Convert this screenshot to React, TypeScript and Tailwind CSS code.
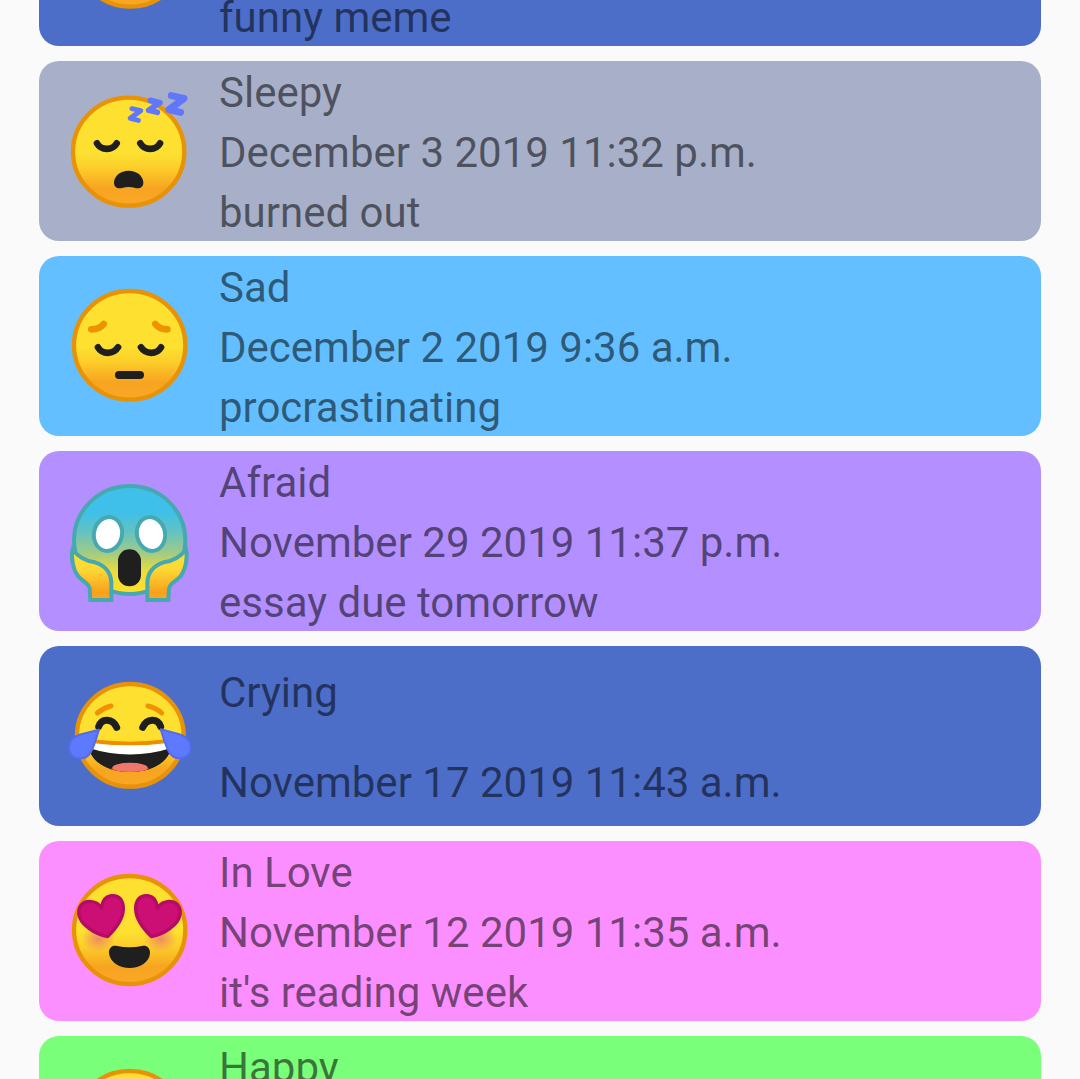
import type { ReactNode } from "react";

type Mood = "laughing" | "sleepy" | "sad" | "afraid" | "inLove" | "happy";

type Entry = {
  mood: Mood;
  color: string;
  lines: string[];
};

const entries: Entry[] = [
  { mood: "laughing", color: "bg-[#4c6ec9]", lines: ["", "", "funny meme"] },
  { mood: "sleepy", color: "bg-[#a8b0c9]", lines: ["Sleepy", "December 3 2019 11:32 p.m.", "burned out"] },
  { mood: "sad", color: "bg-[#63bfff]", lines: ["Sad", "December 2 2019 9:36 a.m.", "procrastinating"] },
  { mood: "afraid", color: "bg-[#b48fff]", lines: ["Afraid", "November 29 2019 11:37 p.m.", "essay due tomorrow"] },
  { mood: "laughing", color: "bg-[#4c6ec9]", lines: ["Crying", "November 17 2019 11:43 a.m."] },
  { mood: "inLove", color: "bg-[#fc8fff]", lines: ["In Love", "November 12 2019 11:35 a.m.", "it's reading week"] },
  { mood: "happy", color: "bg-[#7aff7a]", lines: ["Happy", "", ""] },
];

function Emoji({ viewBox, children }: { viewBox: string; children: ReactNode }) {
  return (
    <svg viewBox={viewBox} className="size-[140px]" aria-hidden="true">
      {children}
    </svg>
  );
}

function Face({ id, cx, cy, rx, ry }: { id: string; cx: number; cy: number; rx: number; ry: number }) {
  return (
    <>
      <defs>
        <linearGradient id={id} x1="0" y1="0" x2="0" y2="1">
          <stop offset="0" stopColor="#fde030" />
          <stop offset="0.52" stopColor="#fde030" />
          <stop offset="0.65" stopColor="#fcce2a" />
          <stop offset="0.84" stopColor="#f7a421" />
          <stop offset="1" stopColor="#f9a825" />
        </linearGradient>
      </defs>
      <ellipse cx={cx} cy={cy} rx={rx} ry={ry} fill={`url(#${id})`} stroke="#e89208" strokeWidth="13" />
    </>
  );
}

function Sleepy() {
  return (
    <Emoji viewBox="-3 3 420 420">
      <Face id="sleepy" cx={206} cy={215} rx={167} ry={162} />
      <g fill="none" stroke="#1f1f1f" strokeWidth="20" strokeLinecap="round" strokeLinejoin="round">
        <path d="M111 190C124 212 157 212 170 190" />
        <path d="M241 190C254 212 287 212 300 190" />
      </g>
      <path
        d="M206 272C181 272 164 287 162 306C161 323 174 327 186 324Q206 318 226 324C238 327 251 323 250 306C248 287 231 272 206 272Z"
        fill="#1f1f1f"
      />
      <g fill="none" stroke="#6177fa" strokeLinejoin="round" strokeLinecap="round">
        <path d="M216 86L242 92L211 115L235 121" strokeWidth="15" />
        <path d="M271 61L300 68L266 91L292 97" strokeWidth="17" />
        <path d="M334 47L372 55L327 89L362 97" strokeWidth="21" />
      </g>
    </Emoji>
  );
}

function Sad() {
  return (
    <Emoji viewBox="-3 3 420 420">
      <Face id="sad" cx={209} cy={211} rx={167} ry={163} />
      <g fill="none" stroke="#ef9200" strokeWidth="20" strokeLinecap="round">
        <path d="M94 163Q119 163 131 147" />
        <path d="M322 163Q298 163 286 147" />
      </g>
      <g fill="none" stroke="#1f1f1f" strokeWidth="20" strokeLinecap="round">
        <path d="M114 217C127 239 160 239 174 217" />
        <path d="M243 217C257 239 290 239 303 217" />
      </g>
      <path d="M177 300H240" stroke="#1f1f1f" strokeWidth="24" strokeLinecap="round" />
    </Emoji>
  );
}

function Afraid() {
  return (
    <Emoji viewBox="-3 3 420 420">
      <defs>
        <linearGradient id="afraid-skin" x1="0" y1="0" x2="0" y2="1">
          <stop offset="0" stopColor="#3ec0ec" />
          <stop offset="0.24" stopColor="#3ec0ea" />
          <stop offset="0.42" stopColor="#62c2c2" />
          <stop offset="0.62" stopColor="#a1cb85" />
          <stop offset="0.8" stopColor="#f1dc36" />
          <stop offset="1" stopColor="#fde030" />
        </linearGradient>
        <linearGradient id="afraid-hand" x1="0" y1="0" x2="0" y2="1">
          <stop offset="0" stopColor="#fde030" />
          <stop offset="0.4" stopColor="#fdd835" />
          <stop offset="0.85" stopColor="#f9a01b" />
          <stop offset="1" stopColor="#f9a825" />
        </linearGradient>
      </defs>
      <ellipse cx="209" cy="210" rx="167" ry="162" fill="url(#afraid-skin)" stroke="#47a9b0" strokeWidth="12" />
      <g fill="#fff" stroke="#47a9b0" strokeWidth="12">
        <ellipse cx="144" cy="192" rx="42" ry="51" transform="rotate(12 144 192)" />
        <ellipse cx="273" cy="192" rx="42" ry="51" transform="rotate(-12 273 192)" />
      </g>
      <rect x="174" y="238" width="69" height="111" rx="34" fill="#1f1f1f" />
      <g fill="url(#afraid-hand)" stroke="#47a9b0" strokeWidth="12" strokeLinejoin="miter">
        <path d="M38 238C32 264 40 300 54 318C68 335 88 340 89 356L91 390H154V338C153 306 132 286 105 277C72 272 54 260 38 238Z" />
        <path d="M378 238C384 264 376 300 362 318C348 335 328 340 327 356L325 390H262V338C263 306 284 286 311 277C344 272 362 260 378 238Z" />
      </g>
    </Emoji>
  );
}

function Laughing({ id }: { id: string }) {
  return (
    <Emoji viewBox="-3 -12 420 420">
      <Face id={id} cx={211} cy={196} rx={160} ry={154} />
      <defs>
        <clipPath id={`${id}-mouth`}>
          <path d="M84 217Q210 226 336 217C336 272 281 306 210 306S84 272 84 217Z" />
        </clipPath>
      </defs>
      <g clipPath={`url(#${id}-mouth)`}>
        <path d="M80 210H340V310H80Z" fill="#1f1f1f" />
        <path d="M80 205H340V232Q210 275 80 232Z" fill="#fff" />
        <ellipse cx="210" cy="321" rx="70" ry="42" fill="#dd4210" />
        <ellipse cx="210" cy="293" rx="53" ry="15" fill="#ef776c" />
      </g>
      <path d="M103 214Q210 227 316 214" fill="none" stroke="#eb8f00" strokeWidth="11" />
      <g fill="none" stroke="#ef9200" strokeWidth="15" strokeLinecap="round">
        <path d="M112 129Q130 114 153 108" />
        <path d="M305 129Q288 114 264 108" />
      </g>
      <g fill="none" stroke="#1f1f1f" strokeWidth="21" strokeLinecap="round">
        <path d="M116 170C125 143 158 145 170 172" />
        <path d="M302 170C293 143 260 145 248 172" />
      </g>
      <g fill="#5e7afc" stroke="#556bee" strokeWidth="6" strokeLinejoin="round">
        <path d="M117 179L64 193C34 201 22 223 29 245C38 270 77 274 92 247C104 226 110 199 117 179Z" />
        <path d="M302 178L355 192C385 200 397 222 390 244C381 269 342 273 327 246C315 225 309 198 302 178Z" />
      </g>
    </Emoji>
  );
}

function InLove() {
  return (
    <Emoji viewBox="-3 3 420 420">
      <Face id="in-love" cx={209} cy={210} rx={167} ry={162} />
      <defs>
        <radialGradient id="blush">
          <stop offset="0" stopColor="#ed7770" stopOpacity="0.8" />
          <stop offset="1" stopColor="#ed7770" stopOpacity="0" />
        </radialGradient>
      </defs>
      <ellipse cx="115" cy="236" rx="50" ry="40" fill="url(#blush)" />
      <ellipse cx="302" cy="236" rx="50" ry="40" fill="url(#blush)" />
      <g fill="#cc0f75" stroke="#b50a65" strokeWidth="10" strokeLinejoin="round">
        <path d="M143 230C105 222 62 195 57 164C53 139 69 123 90 124C107 125 118 133 125 144C126 127 134 110 153 107C179 104 191 124 190 148C189 181 163 210 143 230Z" />
        <path d="M274 230C312 222 355 195 360 164C364 139 348 123 327 124C310 125 299 133 292 144C291 127 283 110 264 107C238 104 226 124 227 148C228 181 254 210 274 230Z" />
      </g>
      <path
        d="M171 258Q209 266 246 258C260 255 270 263 270 279C269 306 239 324 209 324S149 306 147 279C146 263 157 255 171 258Z"
        fill="#1f1f1f"
      />
    </Emoji>
  );
}

function Happy() {
  return (
    <Emoji viewBox="-3 3 420 420">
      <Face id="happy" cx={209} cy={211} rx={167} ry={163} />
      <g fill="none" stroke="#1f1f1f" strokeWidth="20" strokeLinecap="round">
        <path d="M112 200Q144 160 176 200" />
        <path d="M242 200Q274 160 306 200" />
        <path d="M140 270Q209 330 278 270" />
      </g>
    </Emoji>
  );
}

function MoodIcon({ mood, id }: { mood: Mood; id: string }) {
  switch (mood) {
    case "sleepy":
      return <Sleepy />;
    case "sad":
      return <Sad />;
    case "afraid":
      return <Afraid />;
    case "inLove":
      return <InLove />;
    case "happy":
      return <Happy />;
    default:
      return <Laughing id={id} />;
  }
}

function MoodCard({ entry, id }: { entry: Entry; id: string }) {
  return (
    <li className={`flex min-h-[180px] shrink-0 rounded-[20px] ${entry.color}`}>
      <div className="flex w-[180px] shrink-0 items-center justify-center">
        <MoodIcon mood={entry.mood} id={id} />
      </div>
      <div className="flex min-w-0 flex-1 flex-col text-[42px] leading-[56px] text-black/54">
        {entry.lines.map((line, i) => (
          <p key={i} className="flex min-h-[60px] flex-1 items-center pt-1">
            {line}
          </p>
        ))}
      </div>
    </li>
  );
}

export default function App() {
  return (
    <main className="h-screen overflow-hidden bg-[#fafafa] font-['Roboto',sans-serif]">
      <ul className="-mt-[134px] flex flex-col gap-[15px] px-[39px]">
        {entries.map((entry, i) => (
          <MoodCard key={i} entry={entry} id={`entry-${i}`} />
        ))}
      </ul>
    </main>
  );
}
